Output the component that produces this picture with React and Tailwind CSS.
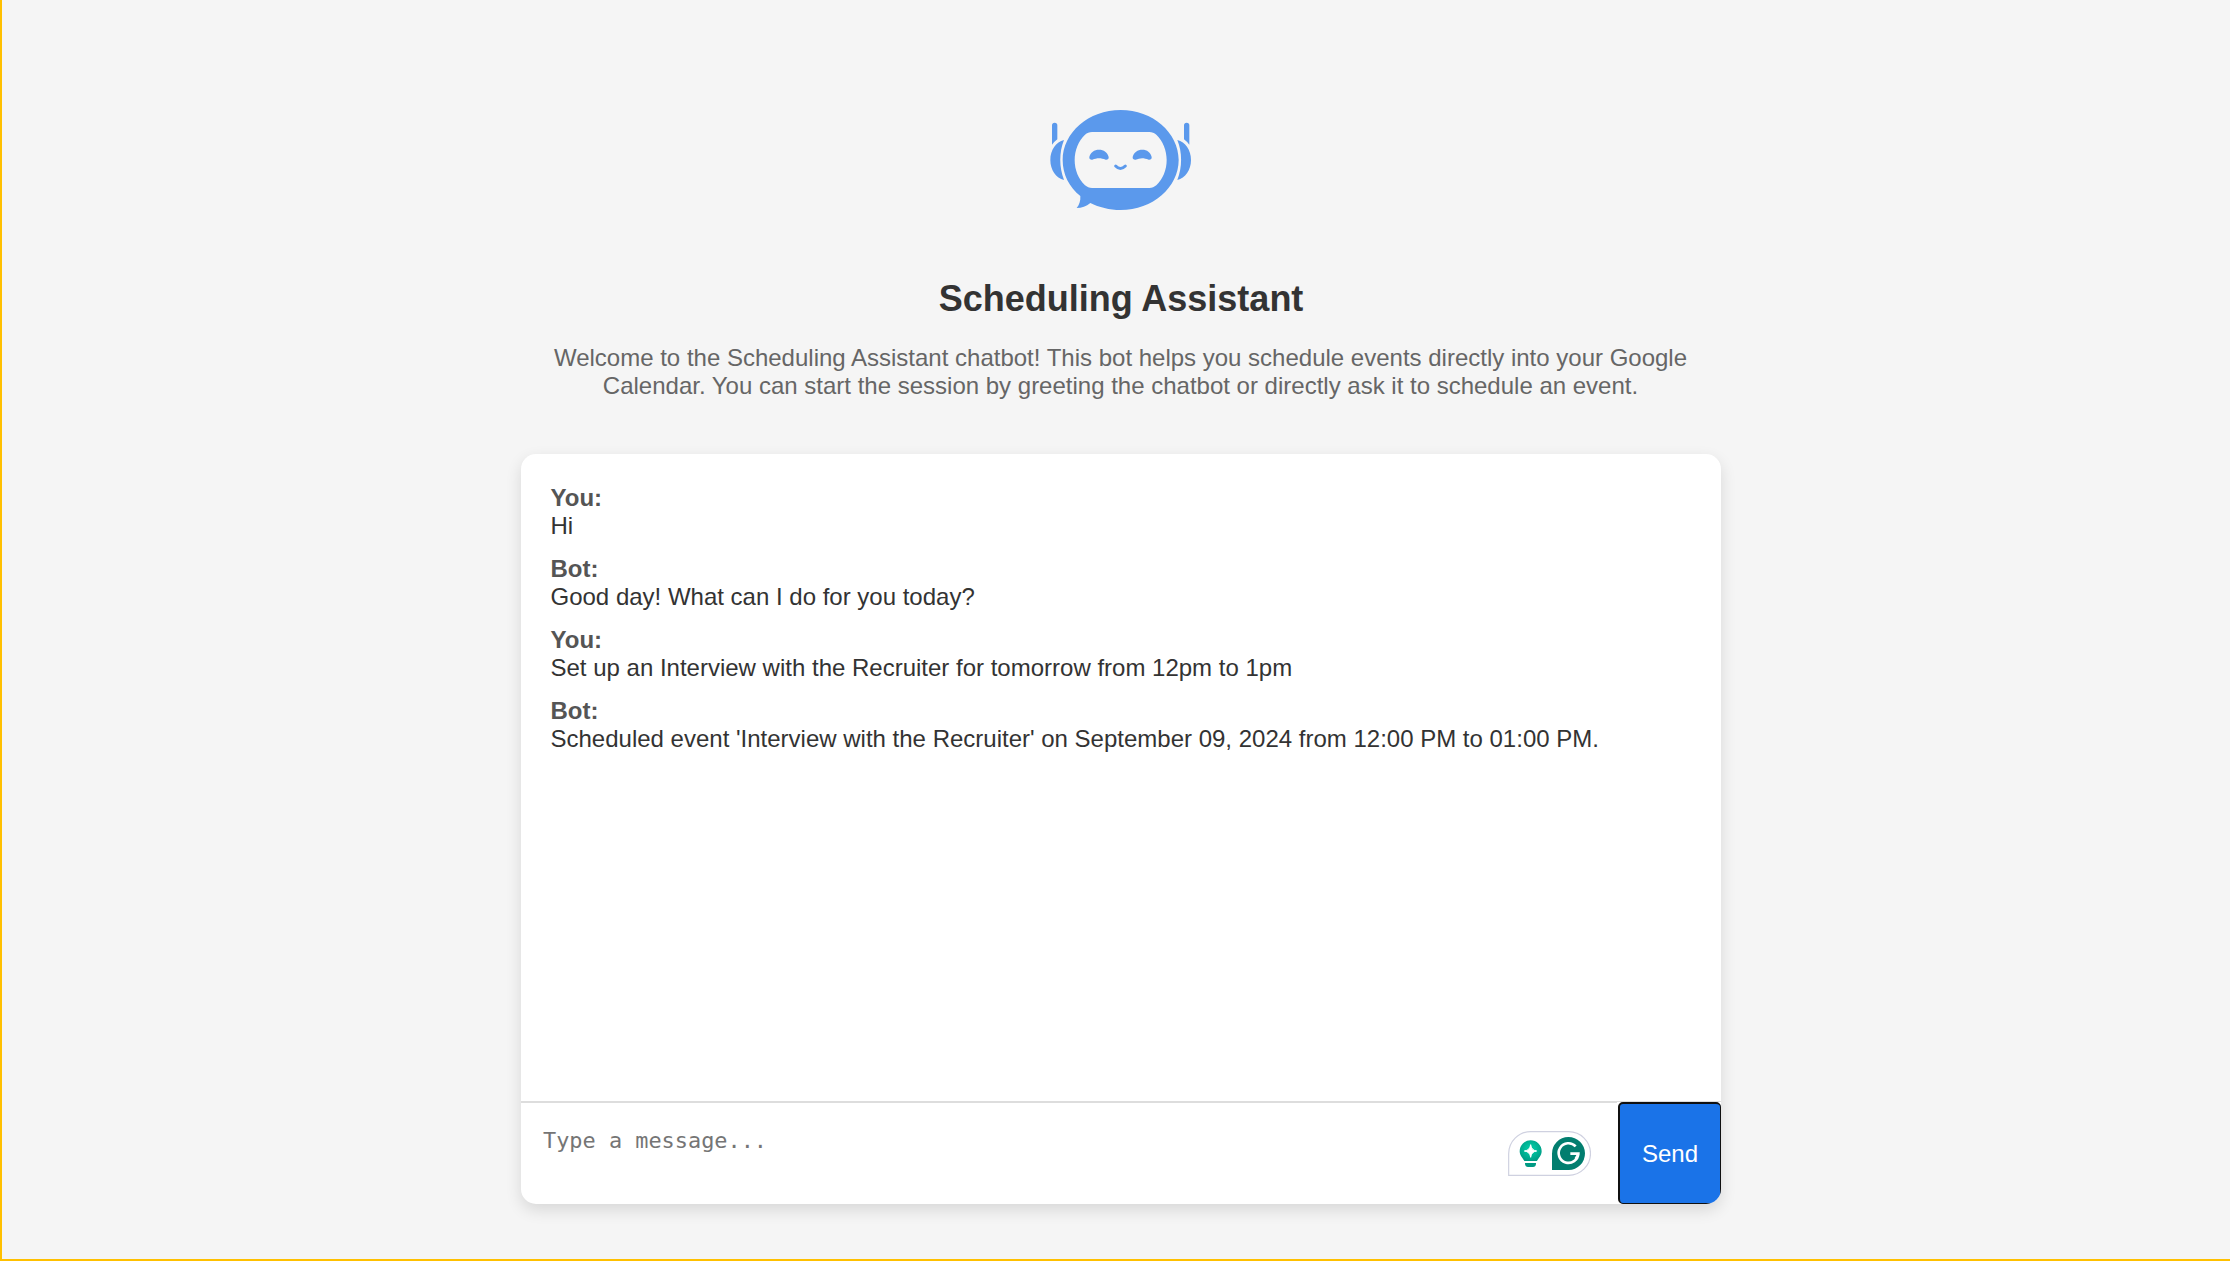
const messages = [
  { sender: "You:", text: "Hi" },
  { sender: "Bot:", text: "Good day! What can I do for you today?" },
  { sender: "You:", text: "Set up an Interview with the Recruiter for tomorrow from 12pm to 1pm" },
  { sender: "Bot:", text: "Scheduled event 'Interview with the Recruiter' on September 09, 2024 from 12:00 PM to 01:00 PM." },
];

function BotLogo() {
  return (
    <svg className="mr-[2px]" width="180" height="140" viewBox="0 0 540 420" fill="#5b99ec" aria-hidden="true">
      <path
        fillRule="evenodd"
        d="M272 60C368 60 446 128 446 210S368 360 272 360C238 360 207 352 181 339C169 349 155 354 140 354C148 344 152 333 151 318C117 291 98 252 98 210C98 128 176 60 272 60ZM186 126C178 126 171 129 165 134C145 153 134 181 134 210S145 267 165 286C171 291 178 294 186 294H358C366 294 373 291 379 286C399 267 410 239 410 210S399 153 379 134C373 129 366 126 358 126Z"
      />
      <path d="M102 150C87 187 87 231 102 270C78 264 61 240 61 210S78 156 102 150Z" />
      <path d="M442 150C457 187 457 231 442 270C466 264 483 240 483 210S466 156 442 150Z" />
      <path d="M66 106A8 8 0 0 1 82 106V148Q74 154 66 164Z" />
      <path d="M478 106A8 8 0 0 0 462 106V148Q470 154 478 164Z" />
      <path d="M178 201C181 187 193 179 207 179S233 187 236 201C237 207 232 210 227 209C213 203 201 203 187 209C182 210 177 207 178 201Z" />
      <path d="M308 201C311 187 323 179 337 179S362 187 365 201C366 207 361 210 356 209C342 203 330 203 317 209C312 210 307 207 308 201Z" />
      <path d="M257 228Q271 243 286 228" fill="none" stroke="#5b99ec" strokeWidth="9" strokeLinecap="round" />
    </svg>
  );
}

function WritingHelper() {
  return (
    <svg width="83" height="45" viewBox="0 0 249 135" aria-hidden="true">
      <defs>
        <radialGradient id="bulb" cx="0.5" cy="0.42" r="0.6">
          <stop offset="0.3" stopColor="#00c3a0" />
          <stop offset="1" stopColor="#009a83" />
        </radialGradient>
      </defs>
      <path d="M2 133V68A66 66 0 0 1 68 2H182A65 65 0 0 1 182 133Z" fill="#fff" stroke="#cfd1e0" strokeWidth="3.5" />
      <path d="M68 28A33 33 0 0 1 101 61C101 74 91 82 87 90H49C45 82 35 74 35 61A33 33 0 0 1 68 28Z" fill="url(#bulb)" />
      <path d="M68 41Q70 58 86 60Q70 62 68 79Q66 62 49 60Q66 58 68 41Z" fill="#fff" stroke="#fff" strokeWidth="3" strokeLinejoin="round" />
      <path d="M51 96H84V99Q83 108 75 108H60Q52 108 51 99Z" fill="#009a83" />
      <path d="M132 117V68A49.500 49.500 0 1 1 182 117Z" fill="#027e6f" />
      <path d="M203 46A29.500 29.500 0 1 0 211 68H187M212 68L203 84" fill="none" stroke="#fff" strokeWidth="8" />
    </svg>
  );
}

function Message({ sender, text }) {
  return (
    <div className="mb-[15px]">
      <div className="font-bold text-[#555]">{sender}</div>
      <div>{text}</div>
    </div>
  );
}

export default function App() {
  return (
    <div className="flex h-[1261px] flex-col items-center border-b-2 border-l-2 border-[#ffc000] bg-[#f5f5f5] pt-[90px] pl-[10px] font-['Liberation_Sans',Arial,sans-serif] text-2xl leading-[28px] text-[#333]">
      <header className="flex w-[1200px] flex-col items-center text-center">
        <BotLogo />
        <h1 className="mt-[48px] text-4xl leading-[41px] font-bold">Scheduling Assistant</h1>
        <p className="mt-[25px] pr-[31px] pl-[30px] text-[#666]">
          Welcome to the Scheduling Assistant chatbot! This bot helps you schedule events directly into your Google
          Calendar. You can start the session by greeting the chatbot or directly ask it to schedule an event.
        </p>
      </header>
      <main className="mt-[54px] flex h-[750px] w-[1200px] shrink-0 flex-col overflow-hidden rounded-[15px] bg-white shadow-[0_6px_16px_rgba(0,0,0,0.12)]">
        <section className="flex-1 py-[30px] pr-[30px] pl-[29.5px]">
          {messages.map((m, i) => (
            <Message key={i} {...m} />
          ))}
        </section>
        <form className="flex h-[103px]" onSubmit={(e) => e.preventDefault()}>
          <div className="flex flex-1 items-center border-t-2 border-[#ddd] pr-[26px]">
            <textarea
              className="h-full min-w-0 flex-1 resize-none px-[22px] pt-[24px] font-['DejaVu_Sans_Mono',monospace] text-[21.9px] leading-[28px] outline-none placeholder:text-[#757575]"
              placeholder="Type a message..."
            />
            <WritingHelper />
          </div>
          <div className="w-[104px] border-t border-[#ddd] pl-px">
            <button className="h-full w-full rounded-[5px] border-t-2 border-r border-b border-l-2 border-[#101010] bg-[#1a73e8] text-white">
              Send
            </button>
          </div>
        </form>
      </main>
    </div>
  );
}
